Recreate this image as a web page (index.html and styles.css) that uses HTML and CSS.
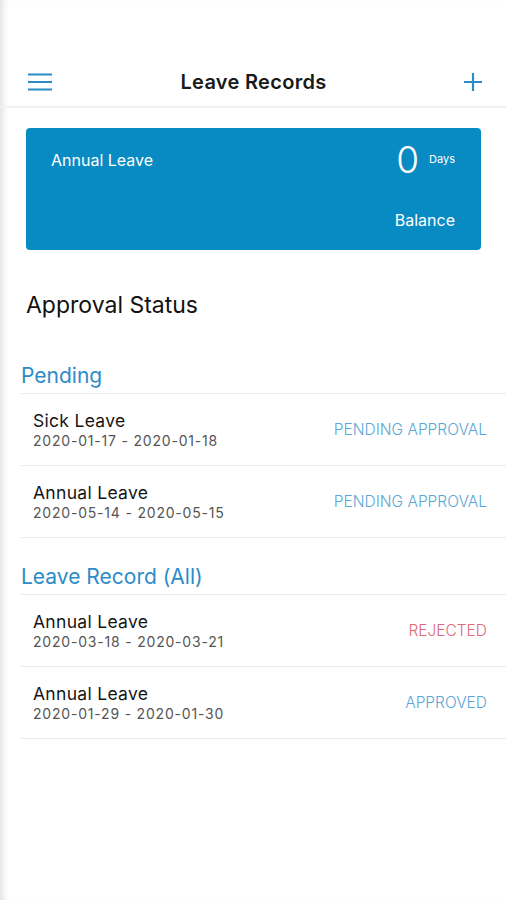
FILE: index.html
```html
<!DOCTYPE html>
<html lang="en">

<head>
    <meta charset="UTF-8">
    <meta name="viewport" content="width=device-width, initial-scale=1.0">
    <title>Leave Records</title>
    <link rel="stylesheet" href="styles.css">
</head>

<body>
    <div class="screen">
        <div class="status-bar"></div>

        <div class="navbar">
            <button class="nav-btn" aria-label="Menu">
                <svg width="24" height="18" viewBox="0 0 24 18">
                    <path d="M0 1.5H24M0 9H24M0 16.5H24" stroke="#2b8cc4" stroke-width="2.2" fill="none" />
                </svg>
            </button>
            <h1 class="nav-title">Leave Records</h1>
            <button class="nav-btn" aria-label="Add">
                <svg width="20" height="20" viewBox="0 0 20 20">
                    <path d="M10 1V19M1 10H19" stroke="#2b8cc4" stroke-width="2.2" fill="none" />
                </svg>
            </button>
        </div>

        <div class="balance-card">
            <div class="balance-top">
                <span class="balance-type">Annual Leave</span>
                <span class="balance-value">0<small>Days</small></span>
            </div>
            <div class="balance-label">Balance</div>
        </div>

        <h2 class="page-heading">Approval Status</h2>

        <div class="section">
            <div class="section-title">Pending</div>
            <ul class="record-list">
                <li class="record">
                    <div>
                        <div class="record-type">Sick Leave</div>
                        <div class="record-date">2020-01-17 - 2020-01-18</div>
                    </div>
                    <span class="record-status">PENDING APPROVAL</span>
                </li>
                <li class="record">
                    <div>
                        <div class="record-type">Annual Leave</div>
                        <div class="record-date">2020-05-14 - 2020-05-15</div>
                    </div>
                    <span class="record-status">PENDING APPROVAL</span>
                </li>
            </ul>
        </div>

        <div class="section">
            <div class="section-title">Leave Record (All)</div>
            <ul class="record-list">
                <li class="record">
                    <div>
                        <div class="record-type">Annual Leave</div>
                        <div class="record-date">2020-03-18 - 2020-03-21</div>
                    </div>
                    <span class="record-status rejected">REJECTED</span>
                </li>
                <li class="record">
                    <div>
                        <div class="record-type">Annual Leave</div>
                        <div class="record-date">2020-01-29 - 2020-01-30</div>
                    </div>
                    <span class="record-status">APPROVED</span>
                </li>
            </ul>
        </div>
    </div>
</body>

</html>
```

FILE: styles.css
```css
body {
    margin: 0;
    font-family: Inter, "Noto Sans", sans-serif;
    background-color: #ffffff;
    color: #111;
}

.screen {
    min-height: 900px;
    box-shadow: inset 7px 0 6px -4px rgba(0, 0, 0, 0.12);
}

.status-bar {
    height: 57px;
}

.navbar {
    height: 49px;
    display: flex;
    align-items: center;
    justify-content: space-between;
    padding: 0 23px 0 28px;
    border-bottom: 2px solid #f1f1f1;
}

.nav-btn {
    border: none;
    background: none;
    padding: 0;
    display: flex;
}

.nav-title {
    margin: 0 8px 0 0;
    font-size: 20px;
    font-weight: 600;
    letter-spacing: 0.3px;
    color: #1a1a1a;
}

.balance-card {
    margin: 20px 25px 0 26px;
    height: 122px;
    box-sizing: border-box;
    padding: 17px 26px 0 25px;
    background-color: #088ac2;
    border-radius: 4px;
    color: white;
}

.balance-top {
    display: flex;
    justify-content: space-between;
    align-items: center;
}

.balance-type {
    font-size: 16px;
}

.balance-value {
    font-size: 37px;
    font-weight: 300;
    line-height: 28px;
}

.balance-value small {
    font-size: 11px;
    font-weight: 400;
    margin-left: 10px;
    vertical-align: 10px;
}

.balance-label {
    margin-top: 36px;
    text-align: right;
    font-size: 16px;
}

.page-heading {
    margin: 41px 0 18px 26px;
    font-size: 23px;
    font-weight: 400;
    line-height: 28px;
}

.section-title {
    padding: 26px 0 4px 21px;
    line-height: 26px;
    font-size: 21px;
    color: #2e8bc9;
}

.section:first-child .section-title {
    padding-top: 0;
}

.record-list {
    list-style: none;
    margin: 0 0 0 20px;
    padding: 0;
    border-top: 1px solid #ebebeb;
}

.record {
    height: 71px;
    display: flex;
    align-items: center;
    justify-content: space-between;
    padding: 0 19px 0 13px;
    border-bottom: 1px solid #ebebeb;
}

.record-type {
    font-size: 17.5px;
    line-height: 21px;
    letter-spacing: 0.3px;
    color: #151515;
}

.record-date {
    font-size: 14px;
    line-height: 19px;
    letter-spacing: 0.8px;
    color: #555;
}

.record-status {
    font-size: 15.5px;
    font-weight: 300;
    color: #5aa6d7;
}

.record-status.rejected {
    color: #e06a76;
}
```
